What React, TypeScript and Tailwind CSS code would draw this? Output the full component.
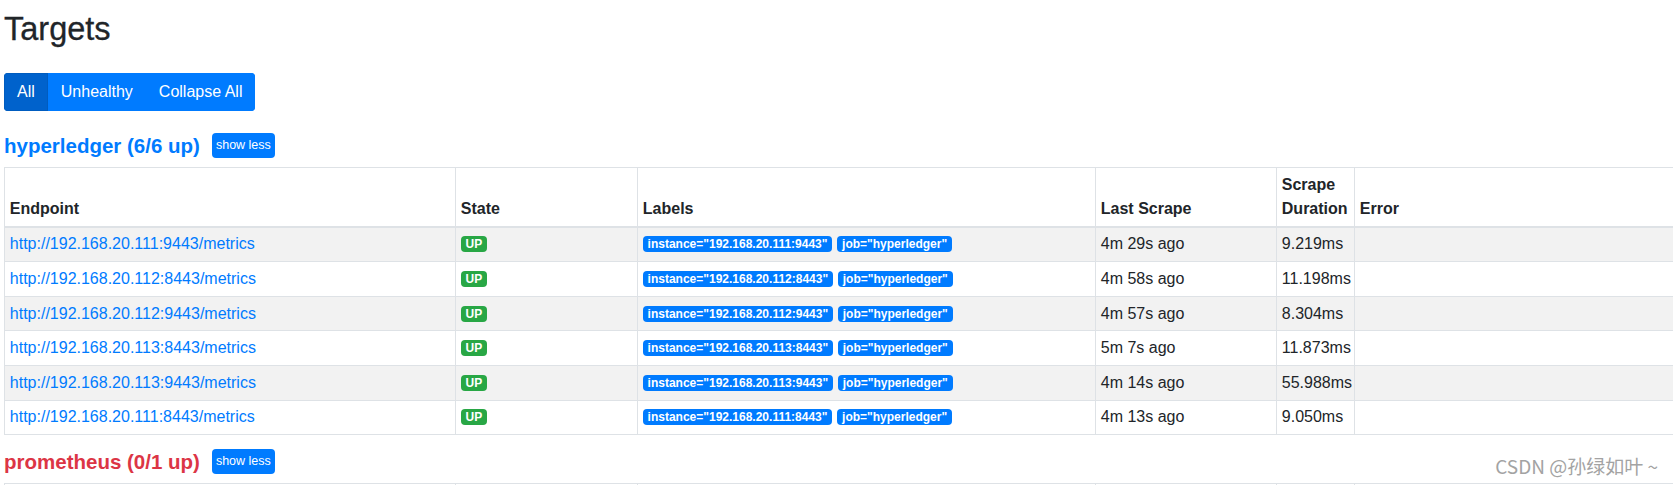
import React from 'react'

type Target = { instance: string; last: string; dur: string }

const TARGETS: Target[] = [
  { instance: '192.168.20.111:9443', last: '4m 29s ago', dur: '9.219ms' },
  { instance: '192.168.20.112:8443', last: '4m 58s ago', dur: '11.198ms' },
  { instance: '192.168.20.112:9443', last: '4m 57s ago', dur: '8.304ms' },
  { instance: '192.168.20.113:8443', last: '5m 7s ago', dur: '11.873ms' },
  { instance: '192.168.20.113:9443', last: '4m 14s ago', dur: '55.988ms' },
  { instance: '192.168.20.111:8443', last: '4m 13s ago', dur: '9.050ms' },
]

const COLUMNS = ['Endpoint', 'State', 'Labels', 'Last Scrape', 'Scrape Duration', 'Error']

const cell = 'border border-[#dee2e6] p-[4.8px] leading-[24px] text-left'

function Badge({ children, green }: { children: React.ReactNode; green?: boolean }) {
  return (
    <span
      className={
        'inline-block rounded-[4px] px-[4.8px] py-[2px] text-[12px] font-bold leading-none text-white ' +
        (green ? 'bg-[#28a745]' : 'bg-[#007bff]')
      }
    >
      {children}
    </span>
  )
}

function PoolHeader({ title, color }: { title: string; color: string }) {
  return (
    <div className="flex h-[25px] items-center gap-[12px]">
      <h3 className={'text-[20.5px] font-bold leading-[24px] ' + color}>{title}</h3>
      <button className="h-[25px] rounded-[4px] bg-[#007bff] px-[4px] text-[12.5px] leading-none text-white">
        show less
      </button>
    </div>
  )
}

// the second pool is cut off by the window, so its header labels are never visible
function TargetTable({ rows, labels = true }: { rows: Target[]; labels?: boolean }) {
  return (
    <table className="w-[1700px] table-fixed border-collapse text-[16px]">
      <colgroup>
        <col className="w-[451px]" />
        <col className="w-[182px]" />
        <col className="w-[458px]" />
        <col className="w-[181px]" />
        <col className="w-[78px]" />
        <col />
      </colgroup>
      <thead>
        <tr className="h-[59px] align-bottom">
          {COLUMNS.map(c => (
            <th key={c} className={cell + ' border-b-2 font-bold'}>
              {labels ? c : null}
            </th>
          ))}
        </tr>
      </thead>
      <tbody>
        {rows.map((r, i) => (
          <tr key={r.instance} className={i % 2 === 0 ? 'bg-[#f2f2f2]' : 'bg-white'}>
            <td className={cell}>
              <a className="text-[#007bff]">http://{r.instance}/metrics</a>
            </td>
            <td className={cell}>
              <div className="flex h-[24px] items-center">
                <Badge green>UP</Badge>
              </div>
            </td>
            <td className={cell}>
              <div className="flex h-[24px] items-center gap-[5px]">
                <Badge>instance="{r.instance}"</Badge>
                <Badge>job="hyperledger"</Badge>
              </div>
            </td>
            <td className={cell}>{r.last}</td>
            <td className={cell}>{r.dur}</td>
            <td className={cell}></td>
          </tr>
        ))}
      </tbody>
    </table>
  )
}

export default function App() {
  return (
    <div className="relative h-[485px] w-[1673px] overflow-hidden bg-white pl-[4px] font-['Liberation_Sans',Arial,sans-serif] text-[#212529]">
      <h2 className="mt-[10px] text-[32.5px] leading-[38px] [-webkit-text-stroke:0.3px_#212529]">Targets</h2>

      <div className="mt-[25px] inline-flex h-[38px] overflow-hidden rounded-[4px] text-[16px] text-white">
        <button className="border border-[#005cbf] bg-[#0062cc] px-[12px] leading-[24px]">All</button>
        <button className="border border-[#007bff] bg-[#007bff] px-[12px] leading-[24px]">Unhealthy</button>
        <button className="border border-[#007bff] bg-[#007bff] px-[12px] leading-[24px]">Collapse All</button>
      </div>

      <div className="mt-[22px]">
        <PoolHeader title="hyperledger (6/6 up)" color="text-[#007bff]" />
        <div className="mt-[9px]">
          <TargetTable rows={TARGETS} />
        </div>
      </div>

      <div className="mt-[14px]">
        <PoolHeader title="prometheus (0/1 up)" color="text-[#dc3545]" />
        <div className="mt-[9px]">
          <TargetTable rows={[]} labels={false} />
        </div>
      </div>

      <div className="absolute right-[15px] top-[456px] font-['Noto_Sans_CJK_SC',sans-serif] text-[19px] leading-none text-[#a3a3a3]">
        CSDN @孙绿如叶 ~
      </div>
    </div>
  )
}
